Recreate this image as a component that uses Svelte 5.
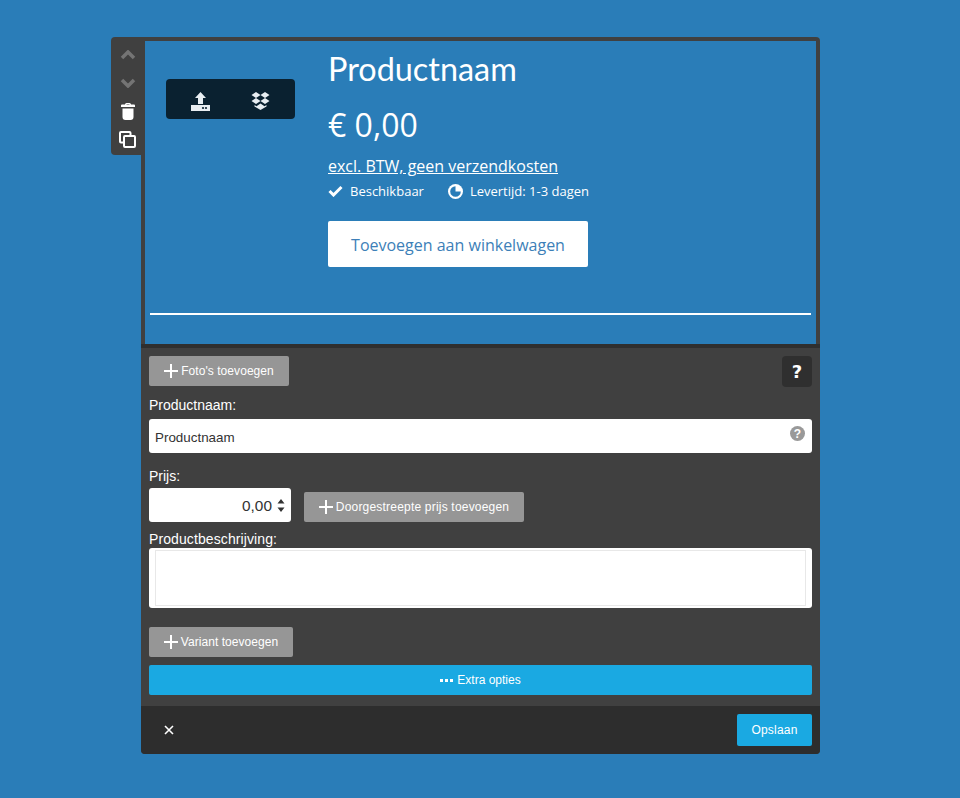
<script>
  const plus = 'M6 0h2v6h6v2H8v6H6V8H0V6h6z';
</script>

<div class="page">
  <div class="editor">
    <div class="tools">
      <svg class="chev" width="16" height="10" viewBox="0 0 16 10"><path d="M2 8l6-6 6 6" /></svg>
      <svg class="chev down" width="16" height="10" viewBox="0 0 16 10"><path d="M2 2l6 6 6-6" /></svg>
      <svg class="trash" width="14" height="17" viewBox="0 0 14 17"><path d="M4 1.500A1.500 1.500 0 0 1 5.500 0h3A1.500 1.500 0 0 1 10 1.500h3a1 1 0 0 1 1 1V4H0V2.500a1 1 0 0 1 1-1zM5.500 1.500h3V1h-3z" fill="#fff" fill-rule="evenodd"/><path d="M1.500 5.500h11V14a3 3 0 0 1-3 3h-5a3 3 0 0 1-3-3z" fill="#fff"/></svg>
      <svg class="copy" width="17" height="17" viewBox="0 0 17 17"><path d="M11.500 4.500V2a1 1 0 0 0-1-1H2a1 1 0 0 0-1 1v8.500a1 1 0 0 0 1 1h2.500" /><rect x="5" y="5" width="11" height="11" rx="1" /></svg>
    </div>

    <section class="preview">
      <div class="product">
        <div class="media">
          <div class="uploaders">
            <svg width="19" height="19" viewBox="0 0 19 19"><path d="M9.500 0L15 6h-3v6H7V6H4z" fill="#e8eef2"/><path d="M0 13h19v6H0z" fill="#e8eef2"/><circle cx="12" cy="16" r="1.100" fill="#0a2130"/><circle cx="15" cy="16" r="1.100" fill="#0a2130"/></svg>
            <svg width="19" height="18" viewBox="0 0 19 18"><path d="M5 0l4.500 3L5 6 .5 3zM14 0l4.500 3L14 6 9.500 3zM5 6l4.500 3L5 12 .5 9zM14 6l4.500 3L14 12 9.500 9z" fill="#e8eef2"/><path d="M3.500 13l2 1.200 4-2.700 4 2.700 2-1.200v1.500l-6 3.500-6-3.500z" fill="#e8eef2"/></svg>
          </div>
        </div>
        <div class="info">
          <h1>Productnaam</h1>
          <div class="price">€ 0,00</div>
          <a class="tax" href="#tax">excl. BTW, geen verzendkosten</a>
          <div class="meta">
            <span class="meta-item">
              <svg width="15" height="12" viewBox="0 0 15 12"><path d="M1.500 6l4 4 8-8" fill="none" stroke="#fff" stroke-width="3"/></svg>
              Beschikbaar
            </span>
            <span class="meta-item">
              <svg width="15" height="15" viewBox="0 0 15 15"><circle cx="7.500" cy="7.500" r="7.500" fill="#fff"/><path d="M7.500 2.200a5.300 5.300 0 1 0 5.300 5.300H7.500z" fill="#2a7db8"/></svg>
              Levertijd: 1-3 dagen
            </span>
          </div>
          <button class="cart">Toevoegen aan winkelwagen</button>
        </div>
      </div>
      <hr />
    </section>

    <section class="form">
      <div class="row between">
        <button class="grey photos"><svg width="14" height="14" viewBox="0 0 14 14"><path d={plus} fill="#fff"/></svg>Foto's toevoegen</button>
        <button class="help">?</button>
      </div>
      <div class="label l1">Productnaam:</div>
      <div class="field name">
        <span>Productnaam</span>
        <svg width="15" height="15" viewBox="0 0 15 15"><circle cx="7.500" cy="7.500" r="7.500" fill="#999"/><text x="7.500" y="12" text-anchor="middle" class="q">?</text></svg>
      </div>
      <div class="label l2">Prijs:</div>
      <div class="row price-row">
        <div class="field number">
          <span>0,00</span>
          <svg width="8" height="15" viewBox="0 0 8 15"><path d="M4 1l3.500 4.500h-7zM4 14L.5 9.500h7z" fill="#333"/></svg>
        </div>
        <button class="grey strike"><svg width="14" height="14" viewBox="0 0 14 14"><path d={plus} fill="#fff"/></svg>Doorgestreepte prijs toevoegen</button>
      </div>
      <div class="label l3">Productbeschrijving:</div>
      <div class="textarea"><div class="inner"></div></div>
      <button class="grey variant"><svg width="14" height="14" viewBox="0 0 14 14"><path d={plus} fill="#fff"/></svg>Variant toevoegen</button>
      <button class="extra"><span class="dots"><i></i><i></i><i></i></span>Extra opties</button>
    </section>

    <footer>
      <svg width="10" height="10" viewBox="0 0 10 10"><path d="M1 1l8 8M9 1l-8 8" stroke="#fff" stroke-width="1.600"/></svg>
      <button class="save">Opslaan</button>
    </footer>
  </div>
</div>

<style>
  :global(body) {
    margin: 0;
    background: #2a7db8;
    font-family: "Liberation Sans", Arial, sans-serif;
  }
  .page {
    height: 798px;
    padding: 37px 140px 0 141px;
    box-sizing: border-box;
    overflow: hidden;
  }
  .editor {
    position: relative;
    width: 679px;
    height: 717px;
    display: flex;
    flex-direction: column;
    background: #404040;
    border-radius: 4px;
  }
  .tools {
    position: absolute;
    left: -30px;
    top: 0;
    width: 34px;
    height: 118px;
    background: #404040;
    border-radius: 4px 0 0 4px;
    display: flex;
    flex-direction: column;
    align-items: center;
    box-sizing: border-box;
    padding: 13px 0 0 0;
  }
  .chev { fill: none; stroke: #747474; stroke-width: 3.500; }
  .chev.down { margin-top: 18px; }
  .trash { margin-top: 15px; margin-left: -1px; }
  .copy { margin-top: 11px; margin-left: -2px; fill: #404040; stroke: #fff; stroke-width: 2; }
  .preview {
    margin: 4px 4px 0;
    height: 303px;
    background: #2a7db8;
    box-sizing: border-box;
    padding: 0 5px;
    display: flex;
    flex-direction: column;
    color: #fff;
  }
  .product { display: flex; height: 272px; }
  .media { width: 178px; flex: none; padding: 38px 0 0 16px; box-sizing: border-box; }
  .uploaders {
    width: 129px;
    height: 40px;
    background: #0a2130;
    border-radius: 4px;
    display: flex;
    align-items: center;
    justify-content: space-between;
    box-sizing: border-box;
    padding: 4px 25px 0 25px;
  }
  .info { font-family: "Open Sans", sans-serif; }
  h1 {
    margin: 6px 0 0;
    font: 400 32.400px/44px Lato, sans-serif;
  }
  .price { font: 400 32px/44px "Open Sans", sans-serif; margin-top: 12px; }
  .tax { display: block; color: #fff; font-size: 16px; line-height: 22px; margin-top: 8px; text-decoration: underline; }
  .meta { display: flex; gap: 24px; font-size: 13px; line-height: 18px; margin-top: 5px; }
  .meta-item { display: flex; align-items: center; gap: 7px; }
  .cart {
    display: block;
    margin-top: 21px;
    width: 260px;
    height: 46px;
    border: 0;
    border-radius: 2px;
    background: #fff;
    color: #3d7fb8;
    font: 400 16px "Open Sans", sans-serif;
    padding: 2px 0 0;
  }
  hr { margin: 0; border: 0; height: 2px; background: #fff; }
  .form {
    border-top: 4px solid #2f2f2f;
    height: 362px;
    box-sizing: border-box;
    padding: 8px 8px 0;
    display: flex;
    flex-direction: column;
    color: #fff;
  }
  .row { display: flex; }
  .between { justify-content: space-between; }
  button { cursor: pointer; font-family: inherit; }
  .grey {
    height: 30px;
    border: 0;
    border-radius: 2px;
    background: #969696;
    color: #fff;
    font-size: 12px;
    letter-spacing: 0.06px;
    display: flex;
    align-items: center;
    justify-content: center;
    gap: 3px;
    padding: 0;
    flex: none;
  }
  .photos { width: 140px; }
  .help {
    width: 30px;
    height: 31px;
    border: 0;
    border-radius: 4px;
    background: #2f2f2f;
    color: #fff;
    font: 700 18px "DejaVu Sans", sans-serif;
    padding: 0;
  }
  .label { font-size: 14px; line-height: 16px; }
  .l1 { margin-top: 10px; }
  .l2 { margin-top: 15px; }
  .l3 { margin-top: 9px; letter-spacing: 0.1px; }
  .field {
    background: #fff;
    border-radius: 3px;
    color: #333;
    font-size: 13.400px;
    display: flex;
    align-items: center;
    box-sizing: border-box;
  }
  .name {
    margin-top: 6px;
    height: 34px;
    padding: 0 7px 0 6px;
    justify-content: space-between;
  }
  .name span { margin-top: 2px; }
  .name svg { margin-top: -6px; }
  .q { font: 700 12px "Liberation Sans", sans-serif; fill: #fff; }
  .price-row { margin-top: 4px; align-items: flex-end; gap: 13px; }
  .number {
    width: 142px;
    height: 34px;
    justify-content: flex-end;
    gap: 5px;
    padding-right: 6px;
    font-size: 15.400px;
  }
  .number span { margin-top: 2px; }
  .strike { width: 220px; letter-spacing: 0.2px; }
  .textarea {
    margin-top: 1px;
    height: 60px;
    background: #fff;
    border-radius: 3px;
    padding: 2px 6px;
    box-sizing: border-box;
  }
  .inner { height: 56px; border: 1px solid #e8e8e8; box-sizing: border-box; }
  .variant { width: 144px; margin-top: 19px; }
  .extra {
    margin-top: 8px;
    height: 30px;
    border: 0;
    border-radius: 2px;
    background: #1aa9e2;
    color: #fff;
    font-size: 12px;
    display: flex;
    align-items: center;
    justify-content: center;
    gap: 4px;
  }
  .dots { display: flex; gap: 2px; }
  .dots i { width: 3px; height: 3px; background: #fff; }
  footer {
    flex: 1;
    background: #2d2d2d;
    border-radius: 0 0 4px 4px;
    display: flex;
    align-items: center;
    justify-content: space-between;
    padding: 0 8px 0 23px;
  }
  .save {
    width: 75px;
    height: 32px;
    border: 0;
    border-radius: 2px;
    background: #1aa9e2;
    color: #fff;
    font-size: 12px;
    letter-spacing: 0.2px;
    padding: 0;
  }
</style>
